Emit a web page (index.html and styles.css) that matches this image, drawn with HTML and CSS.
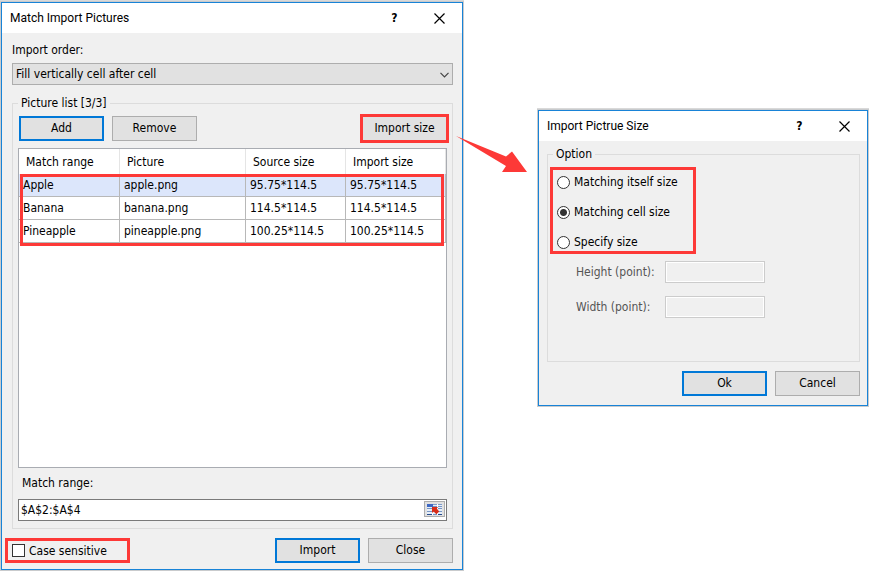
FILE: index.html
```
<!DOCTYPE html>
<html lang="en">
<head>
  <meta charset="UTF-8">
  <title>Match Import Pictures</title>
  <link rel="stylesheet" href="styles.css">
</head>
<body>
  <main class="desktop">
    <section class="dialog">
      <header class="titlebar">
        <h1>Match Import Pictures</h1>
        <button class="title-button" type="button">?</button>
        <button class="title-button" type="button" aria-label="Close window">
          <svg width="11" height="11" viewBox="0 0 11 11"><path d="M.5.5l10 10M10.5.5l-10 10" stroke="#000" stroke-width="1.2" fill="none"/></svg>
        </button>
      </header>
      <form class="dialog-body">
        <label class="field-label" for="order">Import order:</label>
        <div class="select-box">
          <select id="order">
            <option>Fill vertically cell after cell</option>
          </select>
          <svg class="chevron" width="9" height="6" viewBox="0 0 9 6"><path d="M.5.8l4 4 4-4" stroke="#444" stroke-width="1.2" fill="none"/></svg>
        </div>

        <fieldset class="group picture-group">
          <legend>Picture list [3/3]</legend>
          <div class="toolbar">
            <button class="button default" type="button">Add</button>
            <button class="button" type="button">Remove</button>
            <button class="button size-button" type="button">Import size</button>
          </div>
          <div class="picture-list">
            <table>
              <colgroup>
                <col class="col-range">
                <col class="col-picture">
                <col class="col-size">
                <col class="col-size">
              </colgroup>
              <thead>
                <tr><th>Match range</th><th>Picture</th><th>Source size</th><th>Import size</th></tr>
              </thead>
              <tbody>
                <tr class="selected"><td>Apple</td><td>apple.png</td><td>95.75*114.5</td><td>95.75*114.5</td></tr>
                <tr><td>Banana</td><td>banana.png</td><td>114.5*114.5</td><td>114.5*114.5</td></tr>
                <tr><td>Pineapple</td><td>pineapple.png</td><td>100.25*114.5</td><td>100.25*114.5</td></tr>
              </tbody>
            </table>
          </div>
          <label class="range-label" for="range">Match range:</label>
          <div class="range-box">
            <input type="text" id="range" value="$A$2:$A$4">
            <button class="pick-button" type="button" aria-label="Select range">
              <svg width="15" height="11" viewBox="0 0 15 11">
                <path d="M0 0h15v11H0z" fill="#e6eef8"/>
                <path d="M0 0h6v3H0z" fill="#3d68c4"/>
                <path d="M6 0h9v1H6z" fill="#7d9bcb"/>
                <path d="M0 4.5h15M0 7.5h15M0 10.5h15M6 2.5h9" stroke="#7895c4" fill="none"/>
                <path d="M5.5 3v8M10.5 0v11" stroke="#fff" fill="none"/>
                <path d="M0 10h5v1H0zM11 10h4v1h-4z" fill="#264b8c"/>
                <path d="M5 3h6L9.8 4.6l2.400 2.800L9.400 10.200 6.600 7.400 5 9z" fill="#d92c17"/>
              </svg>
            </button>
          </div>
        </fieldset>

        <footer class="actions">
          <label class="case-option"><input type="checkbox">Case sensitive</label>
          <button class="button default" type="button">Import</button>
          <button class="button" type="button">Close</button>
        </footer>
      </form>
    </section>

    <div class="pointer">
      <svg width="72" height="38" viewBox="0 0 72 38"><path d="M0 0l50 20.500 6-5L71 36H46l4-6z" fill="#fd3937"/></svg>
    </div>

    <section class="dialog size-dialog">
      <header class="titlebar">
        <h2>Import Pictrue Size</h2>
        <button class="title-button" type="button">?</button>
        <button class="title-button" type="button" aria-label="Close window">
          <svg width="11" height="11" viewBox="0 0 11 11"><path d="M.5.5l10 10M10.5.5l-10 10" stroke="#000" stroke-width="1.2" fill="none"/></svg>
        </button>
      </header>
      <form class="dialog-body">
        <fieldset class="group option-group">
          <legend>Option</legend>
          <div class="radios">
            <label><input type="radio" name="size">Matching itself size</label>
            <label><input type="radio" name="size" checked>Matching cell size</label>
            <label><input type="radio" name="size">Specify size</label>
          </div>
          <div class="points">
            <label for="height">Height (point):</label>
            <input type="text" id="height" disabled>
            <label for="width">Width (point):</label>
            <input type="text" id="width" disabled>
          </div>
        </fieldset>
        <footer class="actions">
          <button class="button default" type="button">Ok</button>
          <button class="button" type="button">Cancel</button>
        </footer>
      </form>
    </section>
  </main>
</body>
</html>
```
FILE: styles.css
```
* {
  box-sizing: border-box;
}
body {
  margin: 0;
  background: #fff;
  color: #000;
  font: 12px/16px "DejaVu Sans Condensed", "DejaVu Sans", sans-serif;
}
button, input, select {
  font: inherit;
  color: inherit;
  margin: 0;
}
.desktop {
  display: grid;
  grid-template-columns: 462fr 75fr 330fr;
  align-items: start;
  padding: 2px 4px 1px 1px;
}

/* windows */
.dialog {
  background: #f0f0f0;
  border: 1px solid #1883d7;
  box-shadow: 0 0 0 1px #c9cbcd, 0 -1px 0 1px #d9d9d9;
}
.size-dialog {
  margin-top: 108px;
}
.titlebar {
  display: flex;
  align-items: center;
  height: 30px;
  padding-left: 8px;
  background: #fff;
}
.titlebar h1, .titlebar h2 {
  flex: 1;
  margin: 0;
  font: 12px/16px Roboto, sans-serif;
}
.title-button {
  display: flex;
  align-items: center;
  justify-content: center;
  width: 45px;
  height: 28px;
  padding: 0;
  border: none;
  background: none;
  font-weight: bold;
}
.dialog-body {
  padding: 9px 9px 6px 10px;
}
.size-dialog .dialog-body {
  padding: 5px 7px 9px 8px;
}

/* controls */
.button {
  width: 85px;
  height: 25px;
  padding: 0 0 2px;
  border: 1px solid #adadad;
  background: #e1e1e1;
}
.button.default {
  border: 2px solid #0078d7;
}
.field-label {
  display: block;
}
.select-box {
  position: relative;
  margin-top: 5px;
}
.select-box select {
  display: block;
  width: 100%;
  height: 22px;
  padding: 0 3px;
  border: 1px solid #adadad;
  border-radius: 0;
  background: #e1e1e1;
  appearance: none;
}
.chevron {
  position: absolute;
  top: 9px;
  right: 4px;
  pointer-events: none;
}
.group {
  min-width: 0;
  margin: 0;
  border: 1px solid #dcdcdc;
}
.group legend {
  padding: 0 3px;
}

/* picture list */
.picture-group {
  margin-top: 10px;
  padding: 5px 5px 7px;
}
.toolbar {
  display: flex;
  gap: 8px;
  padding-left: 1px;
}
.size-button {
  margin-left: auto;
  outline: 3px solid #fd3937;
  outline-offset: -1px;
}
.picture-list {
  position: relative;
  height: 320px;
  margin-top: 7px;
  border: 1px solid #a9acb2;
  background: #fff;
}
.picture-list::after {
  content: "";
  position: absolute;
  top: 25px;
  left: 1px;
  right: 2px;
  height: 66px;
  border: 3px solid #fd3937;
}
table {
  width: 100%;
  table-layout: fixed;
  border-collapse: separate;
  border-spacing: 0;
}
.col-range {
  width: 101px;
}
.col-picture {
  width: 126px;
}
.col-size {
  width: 100px;
}
th {
  height: 25px;
  padding: 0 7px;
  border-right: 1px solid #e5e5e5;
  font-weight: normal;
  text-align: left;
}
td {
  height: 23px;
  padding: 0 4px;
  border-right: 1px solid #b8b8b8;
  border-bottom: 1px solid #b8b8b8;
}
.selected {
  background: #dce6fb;
}
.range-label {
  display: block;
  margin: 7px 0 8px;
  padding-left: 4px;
}
.range-box {
  display: flex;
  align-items: flex-start;
  height: 22px;
  padding: 1px;
  border: 1px solid #7a7a7a;
  background: #fff;
}
.range-box input {
  flex: 1;
  min-width: 0;
  height: 18px;
  padding: 0 1px;
  border: none;
  background: none;
}
.pick-button {
  display: flex;
  align-items: center;
  justify-content: center;
  width: 21px;
  height: 16px;
  padding: 0;
  border: 1px solid #adadad;
  background: #e1e1e1;
}

/* bottom row */
.actions {
  display: flex;
  justify-content: flex-end;
  gap: 8px;
  margin-top: 9px;
}
.case-option {
  display: flex;
  align-items: center;
  width: 125px;
  height: 25px;
  margin-left: -7px;
  margin-right: auto;
  padding-left: 4px;
  border: 3px solid #fd3937;
}
.case-option input, .radios input {
  appearance: none;
  width: 13px;
  height: 13px;
  margin-right: 4px;
  border: 1px solid #333;
  background: #fff;
}
.radios input {
  border-radius: 50%;
}
.radios input:checked {
  background: radial-gradient(circle, #333 3px, #fff 4px);
}

/* arrow between the windows */
.pointer {
  position: relative;
}
.pointer svg {
  position: absolute;
  top: 134px;
  left: -7px;
}

/* size options */
.option-group {
  padding: 5px 2px 43px;
}
.option-group legend {
  margin-left: 3px;
}
.radios {
  display: flex;
  flex-direction: column;
  gap: 14px;
  width: 146px;
  padding: 4px 4px 1px;
  border: 3px solid #fd3937;
}
.radios label {
  display: flex;
  align-items: center;
}
.points {
  display: grid;
  grid-template-columns: 82px 100px;
  gap: 13px 7px;
  align-items: center;
  margin-top: 7px;
  padding-left: 26px;
  color: #555;
}
.points input {
  height: 22px;
  border: 1px solid #ccc;
  background: #f0f0f0;
  box-shadow: inset 0 0 0 1px #fff;
}
```
